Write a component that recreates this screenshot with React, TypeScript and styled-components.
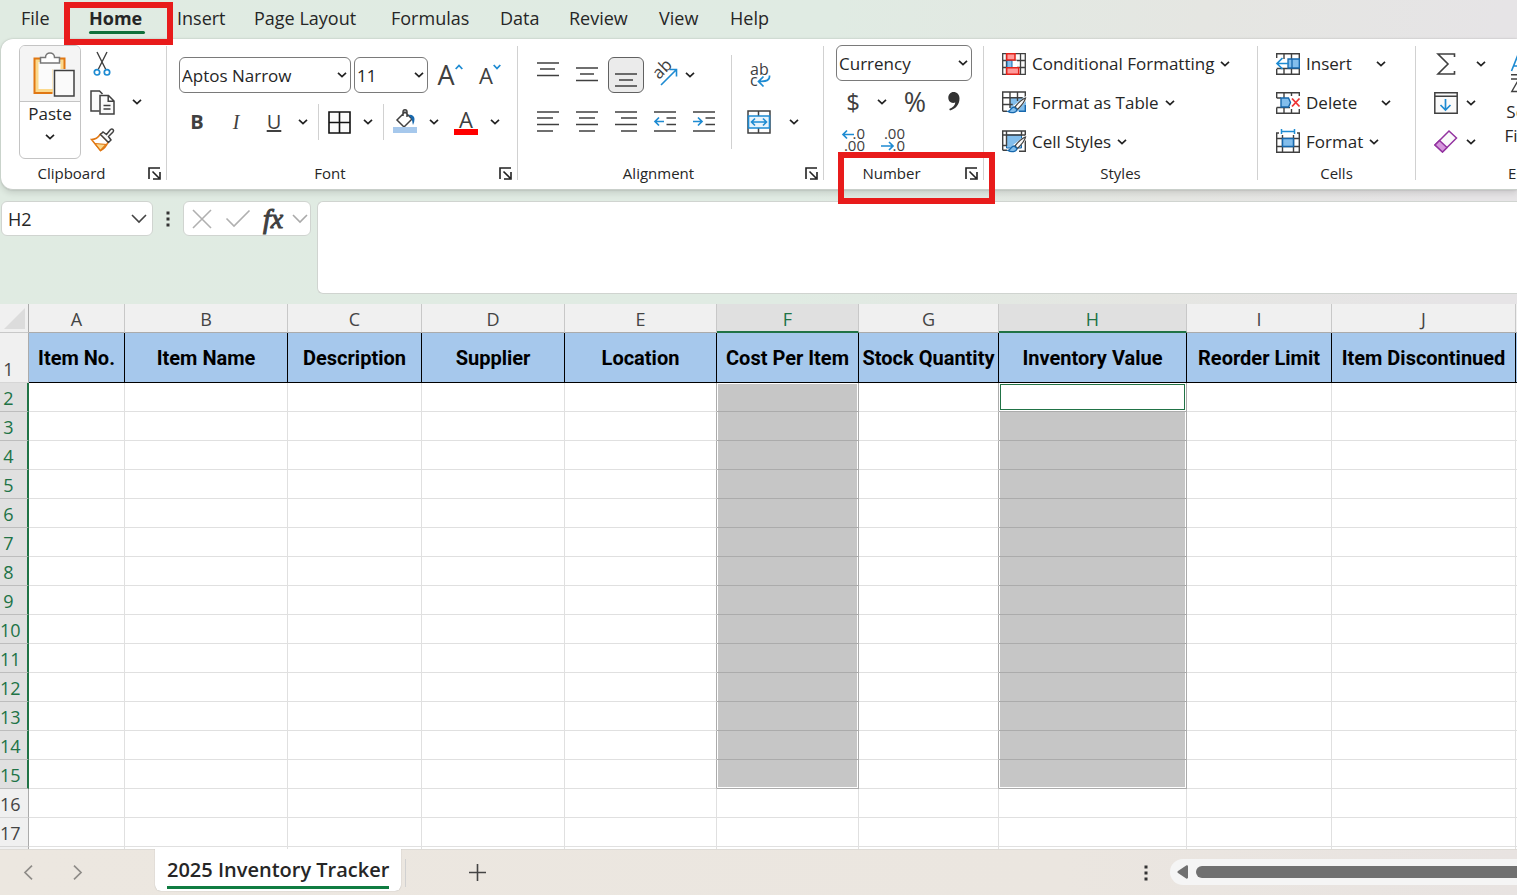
import React from "react";
import styled, { createGlobalStyle, css } from "styled-components";

const ink = "#262626";
const line = "#404040";
const blue = "#1e8bd2";
const green = "#107c41";
const grid = "#e0e0e0";

const GlobalStyle = createGlobalStyle`
  * { box-sizing: border-box; }
  body { margin: 0; overflow: hidden; font-family: "Open Sans", "Noto Sans", sans-serif; color: ${ink}; }
  button, select, input, textarea { font: inherit; color: inherit; }
  button { padding: 0; border: 0; background: none; }
  svg { display: block; flex: none; overflow: visible; }
`;

const Page = styled.div`
  display: flex;
  flex-direction: column;
  height: 100vh;
  overflow: hidden;
  background: linear-gradient(100deg, #e0ebe2 0%, #e0ebe3 50%, #e5e6e2 72%, #e6e4e6 90%);
`;

/* ---------- Tabs ---------- */
const Tabs = styled.nav`
  display: flex;
  gap: 32px;
  height: 39px;
  flex: none;
  padding-left: 21px;
`;
const Tab = styled.a<{ $active?: boolean; $wide?: number }>`
  position: relative;
  color: ${ink};
  text-decoration: none;
  white-space: nowrap;
  font-size: 18px;
  line-height: 36px;
  width: ${(p) => p.$wide}px;
  font-weight: ${(p) => (p.$active ? 700 : 400)};
`;
const TabLine = styled.span`
  position: absolute;
  left: 0;
  right: 0;
  top: 31px;
  height: 3px;
  border-radius: 2px;
  background: #0f703b;
`;
const Mark = styled.span<{ $top: number; $left: number; $right: number; $height: number }>`
  position: absolute;
  z-index: 5;
  top: ${(p) => p.$top}px;
  left: ${(p) => p.$left}px;
  right: ${(p) => p.$right}px;
  height: ${(p) => p.$height}px;
  border: 6px solid #e81b1b;
  pointer-events: none;
`;

/* ---------- Ribbon ---------- */
const Ribbon = styled.section`
  display: flex;
  flex: none;
  margin-left: 1px;
  height: 151px;
  padding-top: 5px;
  background: #fff;
  border: 0 solid #c9cfca;
  border-bottom-width: 1px;
  border-radius: 12px 0 0 12px;
  box-shadow: 0 0 2px rgba(0, 0, 0, 0.2), 0 3px 6px rgba(0, 0, 0, 0.12);
`;
const Group = styled.div<{ $w: number }>`
  position: relative;
  flex: none;
  width: ${(p) => p.$w}px;
  height: 136px;
  display: flex;
  flex-direction: column;
`;
const Divider = styled.span`
  flex: none;
  width: 1px;
  height: 134px;
  margin-top: 2px;
  background: #d1d1d1;
`;
const Body = styled.div<{ $pad?: number }>`
  display: flex;
  height: 122px;
  padding-left: ${(p) => p.$pad ?? 12}px;
`;
const Footer = styled.div`
  display: flex;
  height: 14px;
  font-size: 15px;
  line-height: 14px;
`;
const GroupLabel = styled.span`
  flex: 1;
  text-align: center;
  white-space: nowrap;
`;
const Launcher = styled.button`
  width: 24px;
  padding-left: 6px;
`;
const Stack = styled.div<{ $top?: number; $gap?: number }>`
  display: flex;
  flex-direction: column;
  gap: ${(p) => p.$gap ?? 0}px;
  padding-top: ${(p) => p.$top ?? 0}px;
`;
const Row = styled.div<{ $h?: number; $gap?: number }>`
  display: flex;
  align-items: center;
  height: ${(p) => p.$h ?? 39}px;
  gap: ${(p) => p.$gap ?? 0}px;
`;
const Tool = styled.button<{ $w?: number; $on?: boolean }>`
  display: flex;
  align-items: center;
  justify-content: center;
  flex: none;
  width: ${(p) => p.$w ?? 36}px;
  height: 36px;
  font-size: 20px;
  line-height: 24px;
  color: ${line};
  ${(p) =>
    p.$on &&
    css`
      background: #ebebeb;
      border: 1px solid #616161;
      border-radius: 6px;
    `}
`;
const Italic = styled.i`
  font-family: "Liberation Serif", serif;
`;
const Split = styled.div`
  display: flex;
`;
const ToolDivider = styled.span<{ $h: number; $m: string }>`
  flex: none;
  width: 1px;
  height: ${(p) => p.$h}px;
  margin: ${(p) => p.$m};
  background: #d1d1d1;
`;
const PasteBox = styled.div`
  display: flex;
  flex-direction: column;
  width: 62px;
  height: 114px;
  margin-top: 1px;
  border: 1px solid #c4c4c4;
  border-radius: 6px;
  overflow: hidden;
`;
const PasteTop = styled.button`
  display: flex;
  justify-content: center;
  padding: 6px 0 0 7px;
  height: 56px;
  background: #f4f4f4;
  border-bottom: 1px solid #c4c4c4;
`;
const PasteBottom = styled.button`
  display: flex;
  flex-direction: column;
  align-items: center;
  gap: 8px;
  flex: 1;
  font-size: 17px;
  line-height: 24px;
`;
const Combo = styled.label<{ $w: number }>`
  display: grid;
  align-items: center;
  width: ${(p) => p.$w}px;
  height: 36px;
  svg {
    grid-area: 1 / 1;
    justify-self: end;
    margin-right: 4px;
    pointer-events: none;
  }
`;
const Select = styled.select`
  grid-area: 1 / 1;
  appearance: none;
  width: 100%;
  height: 36px;
  padding: 0 20px 0 2px;
  border: 1px solid #7a7a7a;
  border-radius: 6px;
  background: #fff;
  font-size: 17px;
`;
const Command = styled.button`
  display: flex;
  align-items: center;
  gap: 6px;
  height: 39px;
  font-size: 17px;
  line-height: 24px;
  white-space: nowrap;
`;
const Drop = styled.button<{ $gap: number }>`
  height: 39px;
  padding-left: ${(p) => p.$gap}px;
`;
const SortFilter = styled.button`
  display: flex;
  flex-direction: column;
  align-items: center;
  width: 62px;
  padding-top: 11px;
  margin-left: 2px;
  font-size: 17px;
  line-height: 24px;
  white-space: nowrap;
`;

/* ---------- Formula bar ---------- */
const FormulaBar = styled.div`
  display: flex;
  align-items: flex-start;
  flex: none;
  height: 114px;
  padding: 11px 0 0 1px;
`;
const NameBox = styled.div`
  display: flex;
  align-items: center;
  width: 152px;
  height: 35px;
  padding: 0 5px 0 6px;
  border: 1px solid #d0d4d0;
  border-radius: 6px;
  background: #fff;
`;
const NameInput = styled.input`
  flex: 1;
  min-width: 0;
  padding: 0;
  border: 0;
  outline: 0;
  font-size: 18px;
`;
const Dots = styled.span`
  display: flex;
  justify-content: center;
  align-items: center;
  width: 30px;
  height: 35px;
`;
const FxBox = styled.div`
  display: flex;
  align-items: center;
  width: 128px;
  height: 35px;
  border: 1px solid #d0d4d0;
  border-radius: 6px;
  background: #fff;
`;
const FxButton = styled.button<{ $w: number }>`
  display: flex;
  justify-content: center;
  width: ${(p) => p.$w}px;
  font: italic 400 28px/30px "Liberation Serif", serif;
  -webkit-text-stroke: 1px ${line};
  color: ${line};
`;
const Formula = styled.textarea`
  flex: 1;
  height: 93px;
  margin-left: 6px;
  border: 1px solid #d0d4d0;
  border-right: 0;
  border-radius: 6px 0 0 6px;
  background: #fff;
  resize: none;
  outline: 0;
`;

/* ---------- Sheet ---------- */
const SheetArea = styled.main`
  flex: 1;
  min-height: 0;
  overflow: hidden;
  background: #fff;
`;
const Table = styled.table`
  table-layout: fixed;
  width: 1616px;
  min-width: 100%;
  border-collapse: separate;
  border-spacing: 0;
`;
const Corner = styled.td`
  height: 29px;
  padding: 4px 0 0 4px;
  vertical-align: top;
  background: #f0f0f0;
  border-right: 1px solid #ababab;
  border-bottom: 1px solid #c8c8c8;
`;
const ColHead = styled.th<{ $sel: boolean }>`
  height: 29px;
  padding: ${(p) => (p.$sel ? 4 : 3)}px 0 0;
  font-size: 18px;
  line-height: 23px;
  font-weight: 400;
  color: ${(p) => (p.$sel ? "#217346" : "#444")};
  background: ${(p) => (p.$sel ? "#e0e0e0" : "#f0f0f0")};
  border-right: 1px solid #c8c8c8;
  border-bottom: ${(p) => (p.$sel ? "2px solid #217346" : "1px solid #ababab")};
`;
const RowHead = styled.th<{ $sel: boolean; $first?: boolean }>`
  height: ${(p) => (p.$first ? 50 : 29)}px;
  padding: ${(p) => (p.$sel ? "2px 10px 0 0" : "2px 11px 0 0")};
  vertical-align: bottom;
  font-size: 18px;
  line-height: 26px;
  font-weight: 400;
  white-space: nowrap;
  color: ${(p) => (p.$sel ? "#217346" : "#444")};
  background: ${(p) => (p.$sel ? "#e0e0e0" : "#f0f0f0")};
  border-bottom: 1px solid ${(p) => (p.$sel ? "#bdbdbd" : "#d6d6d6")};
  border-right: ${(p) => (p.$sel ? "2px solid #217346" : "1px solid #ababab")};
`;
const Title = styled.th`
  height: 50px;
  padding: 0;
  background: #a6c8ec;
  border-right: 1px solid #000;
  border-bottom: 1px solid #000;
  color: #000;
  font: 700 20px/24px Roboto, "Liberation Sans", sans-serif;
  white-space: nowrap;
`;
const Cell = styled.td<{ $sel: boolean; $edge: boolean; $pos?: "first" | "last"; $active: boolean }>`
  height: 29px;
  padding: 0;
  border-right: 1px solid ${(p) => (p.$sel || p.$edge ? "#ababab" : grid)};
  border-bottom: 1px solid ${(p) => (p.$sel ? "#ababab" : grid)};
  ${(p) =>
    p.$sel &&
    css`
      background: #c6c6c6;
      box-shadow: inset 1px 0 #fff, inset -1px 0 #fff
        ${p.$pos === "first" ? ", inset 0 1px #fff" : ""}
        ${p.$pos === "last" ? ", inset 0 -1px #fff" : ""};
    `}
  ${(p) =>
    p.$active &&
    css`
      background: #fff;
      box-shadow: inset 0 0 0 1px #fff, inset 0 0 0 2px #217346;
    `}
`;

/* ---------- Bottom bar ---------- */
const BottomBar = styled.footer`
  display: flex;
  flex: none;
  height: 46px;
  border-top: 1px solid #dedbd6;
  background: linear-gradient(90deg, #ece7e0, #ebe6e0 70%, #e8e3e1);
`;
const NavButton = styled.button<{ $w: number }>`
  display: flex;
  align-items: center;
  justify-content: center;
  width: ${(p) => p.$w}px;
`;
const SheetTab = styled.button`
  height: 42px;
  margin: -1px 0 0 57px;
  padding: 4px 12px 0;
  border-radius: 0 0 6px 6px;
  background: #fff;
  box-shadow: 0 0 1px rgba(0, 0, 0, 0.35);
  clip-path: inset(0 -2px -2px -2px);
  font-size: 20px;
  font-weight: 600;
  line-height: 30px;
  white-space: nowrap;
  span {
    display: block;
    height: 34px;
    border-bottom: 3px solid ${green};
  }
`;
const Spacer = styled.div`
  flex: 1;
`;
const Track = styled.div`
  display: flex;
  align-items: center;
  gap: 8px;
  width: 347px;
  height: 26px;
  margin-top: 9px;
  padding-left: 7px;
  border-radius: 13px 0 0 13px;
  background: #f5f5f5;
`;
const Thumb = styled.div`
  flex: 1;
  height: 12px;
  border-radius: 6px 0 0 6px;
  background: #707070;
`;

/* ---------- Icons ---------- */
const Chevron = () => (
  <svg width="10" height="6" viewBox="0 0 10 6" fill="none" stroke="#222" strokeWidth="1.7">
    <path d="M1 .8 5 4.6 9 .8" />
  </svg>
);
const WideChevron = ({ color }: { color: string }) => (
  <svg width="16" height="9" viewBox="0 0 16 9" fill="none" stroke={color} strokeWidth="1.6">
    <path d="M1 1 8 8 15 1" />
  </svg>
);
const LaunchIcon = () => (
  <svg width="13" height="13" viewBox="0 0 13 13" fill="none" stroke="#222" strokeWidth="1.6">
    <path d="M1 12V1H12M4.500 4.500 11 11M12 5v7H5" />
  </svg>
);
const PasteIcon = () => (
  <svg width="42" height="46" viewBox="0 0 42 46" fill="none">
    <path d="M2 6.500h29V17H20v23.500H2z" fill="#fbd98d" />
    <path d="M5.500 10h22v7h-8v20h-14z" fill="#fbfbfb" />
    <path d="M31.500 17V6.500h-30v34.500h18" stroke="#e07712" strokeWidth="2" />
    <path d="M7.500 11V5.500h5C12.500-.5 21.500-.5 21.500 5.500h5V11z" fill="#fff" stroke="#777" strokeWidth="1.500" />
    <path d="M21.500 18.500h19.500v25.500H21.500z" fill="#fafafa" stroke={line} strokeWidth="1.500" />
  </svg>
);
const CutIcon = () => (
  <svg width="18" height="24" viewBox="0 0 18 24" fill="none">
    <path d="M4 0 12.800 17.500M14 0 5.200 17.500" stroke={line} strokeWidth="1.400" />
    <circle cx="4" cy="20.300" r="2.700" stroke={blue} strokeWidth="1.700" />
    <circle cx="14" cy="20.300" r="2.700" stroke={blue} strokeWidth="1.700" />
  </svg>
);
const CopyIcon = () => (
  <svg width="25" height="25" viewBox="0 0 25 25" fill="none" stroke={line} strokeWidth="1.500">
    <path d="M9.500 21H1V1h8.500l3 3" fill="#fafafa" />
    <path d="M10 5.500h8.500L24 11v13H10zM18.200 5.500V11.200H24M13.500 15.500h7M13.500 19h7" fill="#fafafa" />
  </svg>
);
const PainterIcon = () => (
  <svg width="25" height="24" viewBox="0 0 25 24" fill="none">
    <path d="M1.500 11.500C5 11.500 8.500 9 10.500 6L18 14C16.500 18 14 21 10.500 22.500z" fill="#fff" stroke="#e07712" strokeWidth="1.500" />
    <path d="M5 15.500 16 16.500 10.500 22.500z" fill="#fbd98d" stroke="#e07712" strokeWidth="1.200" />
    <path d="M10.500 6.500 13 4l3.500 2.500 4-5c2-1.500 4 .8 2.500 2.500l-4.500 4.500L21 12l-2.500 2.500z" fill="#fafafa" stroke={line} strokeWidth="1.500" />
  </svg>
);
const GrowA = styled.span<{ $size: number }>`
  font-size: ${(p) => p.$size}px;
  line-height: 30px;
`;
const Caret = styled.svg`
  align-self: flex-start;
  margin-top: 7px;
`;
const BordersIcon = () => (
  <svg width="23" height="23" viewBox="0 0 23 23" fill="#fafafa" stroke="#111" strokeWidth="1.600">
    <path d="M1 1h21v21H1zM11.500 1v21M1 11.500h21" />
  </svg>
);
const FillIcon = () => (
  <svg width="24" height="26" viewBox="0 0 24 26" fill="none">
    <path d="M12 3 4 11l7 7 8-8zM10 7V3c0-3 4-3 4 0v5" stroke={line} strokeWidth="1.500" />
    <path d="M15.500 6c3-1 6 1 6 4 0 2-.5 4-1.500 6-1-3 0-6-4.500-10z" fill="#1768ad" />
    <path d="M0 18h24v6H0z" fill="#a6c8ec" />
  </svg>
);
const ColorA = styled.span`
  width: 24px;
  height: 25px;
  border-bottom: 6px solid #f00;
  font-size: 22px;
  line-height: 19px;
  text-align: center;
`;
const Lines = ({ d }: { d: string }) => (
  <svg width="22" height="26" viewBox="0 0 22 26" fill="none" stroke={line} strokeWidth="1.500">
    <path d={d} />
  </svg>
);
const IndentIcon = ({ out }: { out?: boolean }) => (
  <svg width="22" height="26" viewBox="0 0 22 26" fill="none" strokeWidth="1.500">
    <path d="M0 3h22M12.500 9h9.500M12.500 15.500h9.500M0 22h22" stroke={line} />
    <path d={out ? "M10 12.500H1M5 8.500 1 12.500 5 16.500" : "M0 12.500h9M5 8.500 9 12.500 5 16.500"} stroke={blue} strokeWidth="1.700" />
  </svg>
);
const OrientIcon = () => (
  <svg width="26" height="26" viewBox="0 0 26 26" fill="none">
    <text x="0" y="0" transform="translate(7 18) rotate(-45)" fontSize="17" fill={line}>ab</text>
    <path d="M9 23 24 8M17.500 7.500H24.500V14.500" stroke={blue} strokeWidth="1.600" />
  </svg>
);
const WrapIcon = () => (
  <svg width="22" height="27" viewBox="0 0 22 27" fill="none">
    <text x="2" y="13" fontSize="16" fill={line}>ab</text>
    <text x="2" y="24" fontSize="16" fill={line}>c</text>
    <path d="M21.500 13.500c.5 5-3 6-11 6M15.500 14.500 10.500 19.500 15.500 24.500" stroke={blue} strokeWidth="1.700" />
  </svg>
);
const MergeIcon = () => (
  <svg width="24" height="24" viewBox="0 0 24 24" fill="none">
    <path d="M1 1h22v22H1zM11.500 1v22" stroke={line} strokeWidth="1.500" />
    <path d="M1.500 6h21v12h-21z" fill="#e9f4fc" stroke={blue} strokeWidth="1.600" />
    <path d="M4.500 12h15M8 8.500 4.500 12 8 15.500M16 8.500 19.500 12 16 15.500" stroke={blue} strokeWidth="1.600" />
  </svg>
);
const CommaIcon = () => (
  <svg width="12" height="19" viewBox="0 0 12 19">
    <path d="M5.500 0C9 0 11.500 2.500 11.500 6.500c0 6-4 10.500-9.500 12L1.200 17C5 15.500 7 13.500 7.300 10.500 3.500 12 .3 9.500.3 5.500.3 2.500 2.500 0 5.500 0z" fill="#333" />
  </svg>
);
const DecimalIcon = ({ less }: { less?: boolean }) => (
  <svg width="26" height="26" viewBox="0 0 26 26" fill="none">
    <text x="24" y="11" fontSize="15" textAnchor="end" fill={line}>{less ? ".00" : ".0"}</text>
    <text x="24" y="23" fontSize="15" textAnchor="end" fill={line}>{less ? ".0" : ".00"}</text>
    <path d={less ? "M0 18h12M8 14l4 4-4 4" : "M13 6.500H2M6 2.500 2 6.500l4 4"} stroke={blue} strokeWidth="1.700" />
  </svg>
);
const CondIcon = () => (
  <svg width="24" height="22" viewBox="0 0 24 22" fill="none">
    <path d="M.7.7h22.600v20.600H.7zM.7 7.500h22.600M.7 14.500h22.600M4.500.7v20.600M18.500.7v20.600" fill="#fafafa" stroke={line} strokeWidth="1.300" />
    <path d="M5 7.500h10v7H5z" fill="#fff" />
    <path d="M5 7.500h5v7H5z" fill="#83beec" stroke="#1768ad" />
    <path d="M4.700.7h8.300v6.300H4.700zM4.700 14.700h12v6.600h-12z" fill="#ff9a9a" stroke="#e3231b" strokeWidth="1.500" />
  </svg>
);
const Brush = () => (
  <g>
    <path d="M24 5 11 15 5 22h8l11-12z" fill="#fff" />
    <path d="M23.500 7c-4 1.500-9 7-10.500 9l2.500 2.500C18 16 23 11 23.500 7z" fill="#fafafa" stroke={line} strokeWidth="1.300" />
    <path d="M12 16c-3 0-3 4-6 4.500 3 2 8.500 1.500 9-2z" fill="#83beec" stroke="#1768ad" strokeWidth="1.300" />
  </g>
);
const TableIcon = () => (
  <svg width="24" height="23" viewBox="0 0 24 23" fill="none">
    <path d="M8 6.500h16v14H8z" fill="#83beec" />
    <path d="M17 20.300h6.300V14" stroke="#1768ad" strokeWidth="1.400" />
    <path d="M.7 20.300V1h22.600v5M.7 6.700h20M.7 13.500h10M.7 20.300H5M8 1v16M15.500 1v9" stroke={line} strokeWidth="1.400" />
    <Brush />
  </svg>
);
const CellIcon = () => (
  <svg width="24" height="23" viewBox="0 0 24 23" fill="none">
    <path d="M4.500 5h15v13h-15z" fill="#83beec" stroke="#1768ad" />
    <path d="M.7 20.300V1h22.600v20.300H17M.7 5h22.600M4.500 1v15M.7 20.300H5M.7 15.500h4M19.500 1v5" stroke={line} strokeWidth="1.400" />
    <Brush />
  </svg>
);
const InsertIcon = () => (
  <svg width="24" height="22" viewBox="0 0 24 22" fill="none">
    <path d="M.7 5V.8h22.600v20.400H.7V16M8 .8V6M15.500.8v20.400M8 16v5M.7 15.500h22.600" stroke={line} strokeWidth="1.400" />
    <path d="M12 6h11.300v9H12z" fill="#83beec" stroke="#1768ad" strokeWidth="1.300" />
    <path d="M16 6v9" stroke="#1768ad" strokeWidth="1.300" />
    <path d="M13 10.500H1.500M6.500 5 1 10.500 6.500 16" stroke={blue} strokeWidth="1.700" />
  </svg>
);
const DeleteIcon = () => (
  <svg width="24" height="22" viewBox="0 0 24 22" fill="none">
    <path d="M.7 6V.8h22.600V4M.7 6H5M.7 15.500v5.700h22.600V17M.7 15.500H14M8 .8V6M15.500.8V4M8 15.500v5.700M15.500 17v4" stroke={line} strokeWidth="1.400" />
    <path d="M5 6h7.500l2 4.500-2 4.500H5z" fill="#83beec" stroke="#1768ad" strokeWidth="1.400" />
    <path d="M16 6.500l7.500 8M23.500 6.500l-7.500 8" stroke="#e33" strokeWidth="1.800" />
  </svg>
);
const FormatIcon = () => (
  <svg width="24" height="25" viewBox="0 0 24 25" fill="none">
    <path d="M3 4H.7v19.300h22.600V4H21M.7 9.500h22.600M.7 17.500h22.600M6.500 6v17.300M17.500 6v17.300" stroke={line} strokeWidth="1.400" />
    <path d="M6.500 9.500h11v8h-11z" fill="#83beec" stroke="#1768ad" strokeWidth="1.500" />
    <path d="M5.500 2.500h13M5.500 0v5M18.500 0v5" stroke={blue} strokeWidth="1.500" />
  </svg>
);
const SumIcon = () => (
  <svg width="20" height="22" viewBox="0 0 20 22" fill="none" stroke={line} strokeWidth="1.600">
    <path d="M18.500 4V1H2L12 11 2 21h16.500v-3" />
  </svg>
);
const FillDownIcon = () => (
  <svg width="24" height="22" viewBox="0 0 24 22" fill="none">
    <path d="M.8.8h22.400v20.400H.8zM.8 4.300h22.400" fill="#fafafa" stroke={line} strokeWidth="1.500" />
    <path d="M11.500 7v11M6.500 13l5 5 5-5" stroke={blue} strokeWidth="1.700" />
  </svg>
);
const EraserIcon = () => (
  <svg width="24" height="23" viewBox="0 0 24 23" fill="none" stroke="#9333a0" strokeWidth="1.500">
    <path d="M15 1 22.500 8 8.500 22 1 15z" fill="#fafafa" />
    <path d="M5.500 10.500 13 17.500 8.500 22 1 15z" fill="#d597dc" />
  </svg>
);
const SortIcon = () => (
  <svg width="40" height="45" viewBox="0 0 40 45" fill="none">
    <path d="M.5 16 6.500 1l6 15M2.500 11h8" stroke={blue} strokeWidth="1.600" />
    <path d="M0 19.800h38" stroke={line} strokeWidth="1.400" />
    <path d="M0 24h8L.8 36.500H10" stroke={line} strokeWidth="1.400" />
  </svg>
);
const DotsIcon = () => (
  <svg width="4" height="16" viewBox="0 0 4 16" fill="#333">
    <path d="M.5.500h3v3h-3zM.5 6.500h3v3h-3zM.5 12.500h3v3h-3z" />
  </svg>
);

/* ---------- Data ---------- */
const columns = [
  { id: "A", title: "Item No.", w: 96 },
  { id: "B", title: "Item Name", w: 163 },
  { id: "C", title: "Description", w: 134 },
  { id: "D", title: "Supplier", w: 143 },
  { id: "E", title: "Location", w: 152 },
  { id: "F", title: "Cost Per Item", w: 142 },
  { id: "G", title: "Stock Quantity", w: 140 },
  { id: "H", title: "Inventory Value", w: 188 },
  { id: "I", title: "Reorder Limit", w: 145 },
  { id: "J", title: "Item Discontinued", w: 184 },
  { id: "K", title: "", w: 100 },
];
const rows = Array.from({ length: 17 }, (_, i) => i + 2);
const picked = (id?: string) => id === "F" || id === "H";

const tabs = [
  { name: "File", w: 36 },
  { name: "Home", w: 56 },
  { name: "Insert", w: 45 },
  { name: "Page Layout", w: 105 },
  { name: "Formulas", w: 77 },
  { name: "Data", w: 37 },
  { name: "Review", w: 58 },
  { name: "View", w: 39 },
  { name: "Help", w: 40 },
];

function GroupFooter({ label, launch }: { label: string; launch?: boolean }) {
  return (
    <Footer>
      <GroupLabel>{label}</GroupLabel>
      {launch && (
        <Launcher aria-label={`${label} settings`}>
          <LaunchIcon />
        </Launcher>
      )}
    </Footer>
  );
}

function DropTool({ w, label }: { w: number; label: string }) {
  return (
    <Tool $w={w} aria-label={label}>
      <Chevron />
    </Tool>
  );
}

function Picker({ label, value, w }: { label: string; value: string; w: number }) {
  return (
    <Combo $w={w}>
      <Select aria-label={label} defaultValue={value}>
        <option>{value}</option>
      </Select>
      <Chevron />
    </Combo>
  );
}

export default function App() {
  return (
    <Page>
      <GlobalStyle />
      <Tabs>
        {tabs.map((t) => (
          <Tab key={t.name} href="#" $wide={t.w} $active={t.name === "Home"}>
            {t.name}
            {t.name === "Home" && (
              <>
                <TabLine />
                <Mark $top={2} $left={-25} $right={-28} $height={43} />
              </>
            )}
          </Tab>
        ))}
      </Tabs>

      <Ribbon>
        <Group $w={165}>
          <Body $pad={18}>
            <PasteBox>
              <PasteTop aria-label="Paste">
                <PasteIcon />
              </PasteTop>
              <PasteBottom>
                Paste
                <Chevron />
              </PasteBottom>
            </PasteBox>
            <Stack>
              <Row>
                <Tool $w={42} aria-label="Cut"><CutIcon /></Tool>
              </Row>
              <Row $h={38}>
                <Tool $w={42} aria-label="Copy"><CopyIcon /></Tool>
                <DropTool w={28} label="Copy options" />
              </Row>
              <Row $h={38}>
                <Tool $w={42} aria-label="Format Painter"><PainterIcon /></Tool>
              </Row>
            </Stack>
          </Body>
          <GroupFooter label="Clipboard" launch />
        </Group>
        <Divider />

        <Group $w={350}>
          <Body>
            <Stack $top={13} $gap={11}>
              <Row $h={36}>
                <Row $h={36} $gap={3}>
                  <Picker label="Font" value="Aptos Narrow" w={172} />
                  <Picker label="Font size" value="11" w={74} />
                </Row>
                <Tool $w={44} aria-label="Increase font size">
                  <GrowA $size={27}>A</GrowA>
                  <Caret width="8" height="6" viewBox="0 0 8 6" fill="none" stroke={blue} strokeWidth="1.800">
                    <path d="M.7 5 4 1.500 7.300 5" />
                  </Caret>
                </Tool>
                <Tool $w={36} aria-label="Decrease font size">
                  <GrowA $size={22}>A</GrowA>
                  <Caret width="8" height="6" viewBox="0 0 8 6" fill="none" stroke={blue} strokeWidth="1.800">
                    <path d="M.7 1 4 4.500 7.300 1" />
                  </Caret>
                </Tool>
              </Row>
              <Row $h={36}>
                <Tool><b>B</b></Tool>
                <Tool $w={42}><Italic>I</Italic></Tool>
                <Tool $w={34}><u>U</u></Tool>
                <DropTool w={24} label="Underline options" />
                <ToolDivider $h={36} $m="0 3px" />
                <Tool $w={34} aria-label="Borders"><BordersIcon /></Tool>
                <DropTool w={24} label="Border options" />
                <ToolDivider $h={36} $m="0 3px" />
                <Tool aria-label="Fill color"><FillIcon /></Tool>
                <DropTool w={22} label="Fill color options" />
                <Tool $w={42} aria-label="Font color"><ColorA>A</ColorA></Tool>
                <DropTool w={16} label="Font color options" />
              </Row>
            </Stack>
          </Body>
          <GroupFooter label="Font" launch />
        </Group>
        <Divider />

        <Group $w={305}>
          <Body>
            <Stack $top={13} $gap={11}>
              <Row $h={36} $gap={3}>
                <Tool aria-label="Top align"><Lines d="M0 1h22M3 7h15M0 13.500h22" /></Tool>
                <Tool aria-label="Middle align"><Lines d="M0 6h22M4 12h14M0 18.500h22" /></Tool>
                <Tool $on aria-label="Bottom align"><Lines d="M0 12h22M4 18h14M0 24h22" /></Tool>
                <Split>
                  <Tool aria-label="Orientation"><OrientIcon /></Tool>
                  <DropTool w={14} label="Orientation options" />
                </Split>
              </Row>
              <Row $h={36} $gap={3}>
                <Tool aria-label="Align left"><Lines d="M0 3h22M0 9h16M0 15.500h22M0 22h16" /></Tool>
                <Tool aria-label="Center"><Lines d="M0 3h22M3 9h16M0 15.500h22M3 22h16" /></Tool>
                <Tool aria-label="Align right"><Lines d="M0 3h22M6 9h16M0 15.500h22M6 22h16" /></Tool>
                <Tool aria-label="Decrease indent"><IndentIcon out /></Tool>
                <Tool aria-label="Increase indent"><IndentIcon /></Tool>
              </Row>
            </Stack>
            <ToolDivider $h={94} $m="11px 9px 0" />
            <Stack $top={13} $gap={11}>
              <Tool aria-label="Wrap text"><WrapIcon /></Tool>
              <Split>
                <Tool aria-label="Merge and center"><MergeIcon /></Tool>
                <DropTool w={34} label="Merge options" />
              </Split>
            </Stack>
          </Body>
          <GroupFooter label="Alignment" launch />
        </Group>
        <Divider />

        <Group $w={159}>
          <Body>
            <Stack>
              <Row $h={38}>
                <Picker label="Number format" value="Currency" w={136} />
              </Row>
              <Row>
                <Tool $w={34}><GrowA $size={24}>$</GrowA></Tool>
                <DropTool w={24} label="Currency options" />
                <Tool $w={42}><GrowA $size={27}>%</GrowA></Tool>
                <Tool aria-label="Comma style"><CommaIcon /></Tool>
              </Row>
              <Row>
                <Tool aria-label="Increase decimal"><DecimalIcon /></Tool>
                <Tool $w={44} aria-label="Decrease decimal"><DecimalIcon less /></Tool>
              </Row>
            </Stack>
          </Body>
          <GroupFooter label="Number" launch />
          <Mark $top={108} $left={14} $right={-12} $height={52} />
        </Group>
        <Divider />

        <Group $w={273}>
          <Body $pad={18}>
            <Stack>
              <Command><CondIcon />Conditional Formatting<Chevron /></Command>
              <Command><TableIcon />Format as Table<Chevron /></Command>
              <Command><CellIcon />Cell Styles<Chevron /></Command>
            </Stack>
          </Body>
          <GroupFooter label="Styles" />
        </Group>
        <Divider />

        <Group $w={157}>
          <Body $pad={18}>
            <Stack>
              <Split>
                <Command><InsertIcon />Insert</Command>
                <Drop $gap={24} aria-label="Insert options"><Chevron /></Drop>
              </Split>
              <Split>
                <Command><DeleteIcon />Delete</Command>
                <Drop $gap={24} aria-label="Delete options"><Chevron /></Drop>
              </Split>
              <Command><FormatIcon />Format<Chevron /></Command>
            </Stack>
          </Body>
          <GroupFooter label="Cells" />
        </Group>
        <Divider />

        <Group $w={232}>
          <Body $pad={12}>
            <Stack>
              <Row>
                <Tool aria-label="AutoSum"><SumIcon /></Tool>
                <DropTool w={34} label="AutoSum options" />
              </Row>
              <Row>
                <Tool aria-label="Fill"><FillDownIcon /></Tool>
                <DropTool w={14} label="Fill options" />
              </Row>
              <Row>
                <Tool aria-label="Clear"><EraserIcon /></Tool>
                <DropTool w={14} label="Clear options" />
              </Row>
            </Stack>
            <SortFilter>
              <SortIcon />
              <span>Sort &amp;</span>
              <Row $h={24} $gap={3}>Filter<Chevron /></Row>
            </SortFilter>
          </Body>
          <GroupFooter label="Editing" />
        </Group>
      </Ribbon>

      <FormulaBar>
        <NameBox>
          <NameInput aria-label="Name box" defaultValue="H2" />
          <WideChevron color="#444" />
        </NameBox>
        <Dots><DotsIcon /></Dots>
        <FxBox>
          <FxButton $w={36} aria-label="Cancel">
            <svg width="18" height="18" viewBox="0 0 18 18" fill="none" stroke="#b0b0b0" strokeWidth="1.600">
              <path d="M0 0 18 18M18 0 0 18" />
            </svg>
          </FxButton>
          <FxButton $w={36} aria-label="Enter">
            <svg width="24" height="17" viewBox="0 0 24 17" fill="none" stroke="#b0b0b0" strokeWidth="1.600">
              <path d="M.5 8.500 8 16 23.500.5" />
            </svg>
          </FxButton>
          <FxButton $w={34}>fx</FxButton>
          <FxButton $w={20} aria-label="Function options">
            <WideChevron color="#aaa" />
          </FxButton>
        </FxBox>
        <Formula aria-label="Formula" />
      </FormulaBar>

      <SheetArea>
        <Table>
          <colgroup>
            <col width={29} />
            {columns.map((c) => (
              <col key={c.id} width={c.w} />
            ))}
          </colgroup>
          <thead>
            <tr>
              <Corner>
                <svg width="21" height="21" viewBox="0 0 21 21" fill="#dcdcdc">
                  <path d="M21 0V21H0z" />
                </svg>
              </Corner>
              {columns.map((c) => (
                <ColHead key={c.id} scope="col" $sel={picked(c.id)}>{c.id}</ColHead>
              ))}
            </tr>
          </thead>
          <tbody>
            <tr>
              <RowHead scope="row" $sel={false} $first>1</RowHead>
              {columns.map((c) => (
                <Title key={c.id}>{c.title}</Title>
              ))}
            </tr>
            {rows.map((r) => (
              <tr key={r}>
                <RowHead scope="row" $sel={r <= 15}>{r}</RowHead>
                {columns.map((c, i) => (
                  <Cell
                    key={c.id}
                    $sel={r <= 15 && picked(c.id)}
                    $edge={r <= 15 && picked(columns[i + 1]?.id)}
                    $pos={r === 2 ? "first" : r === 15 ? "last" : undefined}
                    $active={r === 2 && c.id === "H"}
                  />
                ))}
              </tr>
            ))}
          </tbody>
        </Table>
      </SheetArea>

      <BottomBar>
        <NavButton $w={57} aria-label="Previous sheet">
          <svg width="9" height="15" viewBox="0 0 9 15" fill="none" stroke="#8f8c88" strokeWidth="1.700">
            <path d="M8 .7 1 7.500 8 14.300" />
          </svg>
        </NavButton>
        <NavButton $w={41} aria-label="Next sheet">
          <svg width="9" height="15" viewBox="0 0 9 15" fill="none" stroke="#8f8c88" strokeWidth="1.700">
            <path d="M1 .7 8 7.500 1 14.300" />
          </svg>
        </NavButton>
        <SheetTab><span>2025 Inventory Tracker</span></SheetTab>
        <ToolDivider $h={28} $m="9px 0 0 4px" />
        <NavButton $w={142} aria-label="New sheet">
          <svg width="17" height="17" viewBox="0 0 17 17" fill="none" stroke="#444" strokeWidth="1.600">
            <path d="M8.500 0v17M0 8.500h17" />
          </svg>
        </NavButton>
        <Spacer />
        <NavButton $w={48} aria-label="Resize scroll bar"><DotsIcon /></NavButton>
        <Track>
          <svg width="11" height="14" viewBox="0 0 11 14" fill="#707070">
            <path d="M11 1.500v11c0 1-1 1.500-1.800 1L1 8C.2 7.500.2 6.500 1 6L9.200.5C10 0 11 .5 11 1.500z" />
          </svg>
          <Thumb />
        </Track>
      </BottomBar>
    </Page>
  );
}
